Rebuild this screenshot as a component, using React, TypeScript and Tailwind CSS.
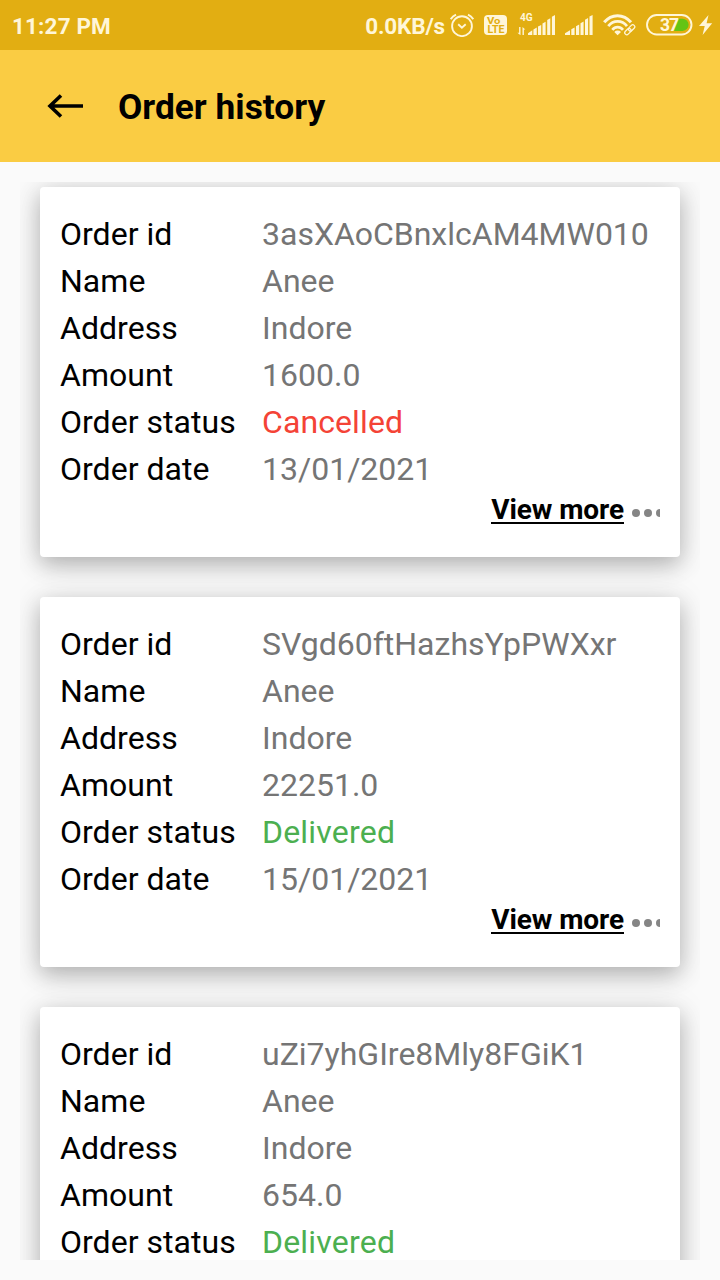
type Order = {
  id: string;
  name: string;
  address: string;
  amount: string;
  status: 'Cancelled' | 'Delivered';
  date: string;
};

const orders: Order[] = [
  { id: '3asXAoCBnxlcAM4MW010', name: 'Anee', address: 'Indore', amount: '1600.0', status: 'Cancelled', date: '13/01/2021' },
  { id: 'SVgd60ftHazhsYpPWXxr', name: 'Anee', address: 'Indore', amount: '22251.0', status: 'Delivered', date: '15/01/2021' },
  { id: 'uZi7yhGIre8Mly8FGiK1', name: 'Anee', address: 'Indore', amount: '654.0', status: 'Delivered', date: '15/01/2021' },
];

function AlarmIcon() {
  return (
    <svg className="ml-[5px] h-6 w-6 shrink-0" viewBox="0 0 24 24" fill="none" stroke="#fff6d8" strokeWidth="1.9">
      <circle cx="12" cy="13.2" r="9.9" />
      <path d="M8.2 11.2l3.7 3.4 3.8-3.4" />
      <path d="M.7 6.2A12 12 0 0 1 6 1.6M23.3 6.2A12 12 0 0 0 18 1.6" strokeWidth="2" />
    </svg>
  );
}

function VolteIcon() {
  return (
    <svg className="ml-[10px] h-5 w-[23px] shrink-0" viewBox="0 0 23 20" fill="#e2ae12" fontWeight="700">
      <rect width="23" height="20" rx="4" fill="#fff6d8" />
      <text x="3" y="9.3" fontSize="9.5" textLength="13.5" lengthAdjust="spacingAndGlyphs">Vo</text>
      <text x="3.4" y="18.1" fontSize="10.5" textLength="17" lengthAdjust="spacingAndGlyphs">LTE</text>
    </svg>
  );
}

function Bars() {
  return (
    <svg className="h-5 w-[28px] shrink-0" viewBox="0 0 28 20" fill="#fff6d8">
      <path d="M0 20v-1.8L5 15.3V20zM6.3 14.2l3.3-1.7V20H6.3zM11 11.3l3.2-1.8V20H11zM15.5 8.3l3.1-1.8V20h-3.1zM20 4.8l3.1-1.8v17H20zM24.5 1.6L27.6 0v20h-3.1z" />
    </svg>
  );
}

function CellularIcon() {
  return (
    <svg className="ml-[10px] h-[24px] w-[39px] shrink-0 overflow-visible" viewBox="0 0 39 24" fill="#fff6d8">
      <text x="3" y="7.6" fontSize="10.5" fontWeight="700" textLength="12.7" lengthAdjust="spacingAndGlyphs">4G</text>
      <path d="M2.1 14v5.7H.4l2.8 2.4h.3V14zM5.5 22v-8L8.3 16.6H6.9V22z" />
      <path d="M11 22V20.2l4.3-3V22zM16.4 16.4l3.4-1.8V22h-3.4zM21 13.6l3.2-1.7V22H21zM25.5 10.5l3.1-1.7V22h-3.1zM30.2 7L33.3 5.2V22h-3.1zM34.9 3.8L38 2v20h-3.1z" />
    </svg>
  );
}

function WifiIcon() {
  return (
    <svg className="ml-[10px] h-[22px] w-[33px] shrink-0" viewBox="0 0 33 22" fill="none" stroke="#fff6d8">
      <path d="M1.2 8.3C8.5-.6 20.5-.6 28 8.3" strokeWidth="3" />
      <path d="M5.3 12.1c5-6.3 13.7-6.3 18.7 0" strokeWidth="2.8" />
      <path d="M9.3 15.8c3-3.7 7.6-3.7 10.7 0" strokeWidth="2.7" />
      <path d="M11.3 18a4.5 4.5 0 0 1 6.7 0l-3.4 3.3z" fill="#fff6d8" stroke="none" />
      <g strokeWidth="1.3" transform="rotate(-45 26.7 15.8)">
        <rect x="20.6" y="13.8" width="7.2" height="4" rx="2" />
        <rect x="25.8" y="13.8" width="7.2" height="4" rx="2" />
      </g>
    </svg>
  );
}

function BatteryIcon() {
  return (
    <svg className="ml-[10px] h-[22px] w-[47px] shrink-0" viewBox="0 0 47 22">
      <rect x="1" y="1" width="44.5" height="19.5" rx="9.7" fill="none" stroke="#fff6d8" strokeWidth="1.9" />
      <path d="M31.5 4.7h5a6.1 6.1 0 0 1 0 12.2h-8.7z" fill="#64c414" />
      <text x="14" y="16.9" fill="#fff6d8" fontSize="17.5" fontWeight="700" letterSpacing="-1">37</text>
    </svg>
  );
}

function StatusBar() {
  return (
    <div className="flex h-[50px] items-center bg-[#e2ae12] pt-[2px] pr-[7px] pl-3 text-[#fff6d8]">
      <span className="mt-[2px] text-[22.5px] font-bold tracking-[0.15px]">11:27 PM</span>
      <span className="mt-[2px] ml-auto text-[22.5px] font-bold tracking-[-0.15px]">0.0KB/s</span>
      <div className="flex -translate-y-[1px] items-center">
        <AlarmIcon />
        <VolteIcon />
        <CellularIcon />
        <div className="ml-[9px]"><Bars /></div>
        <WifiIcon />
        <BatteryIcon />
        <svg className="ml-[6px] h-5 w-[14px] shrink-0" viewBox="0 0 14 20" fill="#fff6d8">
          <path d="M9.5 0L0 11h5.7L3.6 20 13.2 8.3H7.6z" />
        </svg>
      </div>
    </div>
  );
}

function OrderCard({ order }: { order: Order }) {
  const rows = [
    ['Order id', order.id],
    ['Name', order.name],
    ['Address', order.address],
    ['Amount', order.amount],
    ['Order status', order.status],
    ['Order date', order.date],
  ];
  return (
    <article className="h-[370px] shrink-0 rounded bg-white px-5 pt-[23px] shadow-[0_8px_22px_rgba(0,0,0,0.25),0_2px_36px_rgba(0,0,0,0.09)]">
      <dl>
        {rows.map(([label, value]) => (
          <div key={label} className="flex h-[47px] items-center text-[32px] whitespace-nowrap">
            <dt className="w-[202px] shrink-0 tracking-[0.03px] text-black">{label}</dt>
            <dd
              className={
                label !== 'Order status'
                  ? 'text-[#757575]'
                  : value === 'Cancelled'
                    ? 'tracking-[0.1px] text-[#f44336]'
                    : 'tracking-[0.2px] text-[#4caf50]'
              }
            >
              {value}
            </dd>
          </div>
        ))}
      </dl>
      <div className="flex h-9 items-center justify-end">
        <a className="border-b-2 border-black pt-[2px] text-[28px] leading-[24px] font-bold tracking-[-0.08px] text-black">View more</a>
        <svg className="mt-[5px] ml-2 h-2 w-7" viewBox="0 0 28 8" fill="#858585">
          <circle cx="4" cy="4" r="4" />
          <circle cx="16" cy="4" r="4" />
          <circle cx="28" cy="4" r="4" />
        </svg>
      </div>
    </article>
  );
}

export default function App() {
  return (
    <div className="flex h-[1280px] w-[720px] flex-col overflow-hidden bg-[#fafafa] font-['Roboto',sans-serif]">
      <StatusBar />
      <header className="flex h-28 shrink-0 items-center bg-[#facc43] pl-[47px]">
        <svg className="h-6 w-9" viewBox="0 0 36 24" fill="none" stroke="#000">
          <path d="M36 12H3M14 1.5L3 12l11 10.5" strokeWidth="3.6" />
        </svg>
        <h1 className="mt-[3px] ml-[35px] text-[35.3px] font-bold text-black">Order history</h1>
      </header>
      <main className="mx-5 mt-5 flex h-[1078px] flex-col gap-10 overflow-hidden px-5 pt-[5px]">
        {orders.map((order) => (
          <OrderCard key={order.id} order={order} />
        ))}
      </main>
    </div>
  );
}
